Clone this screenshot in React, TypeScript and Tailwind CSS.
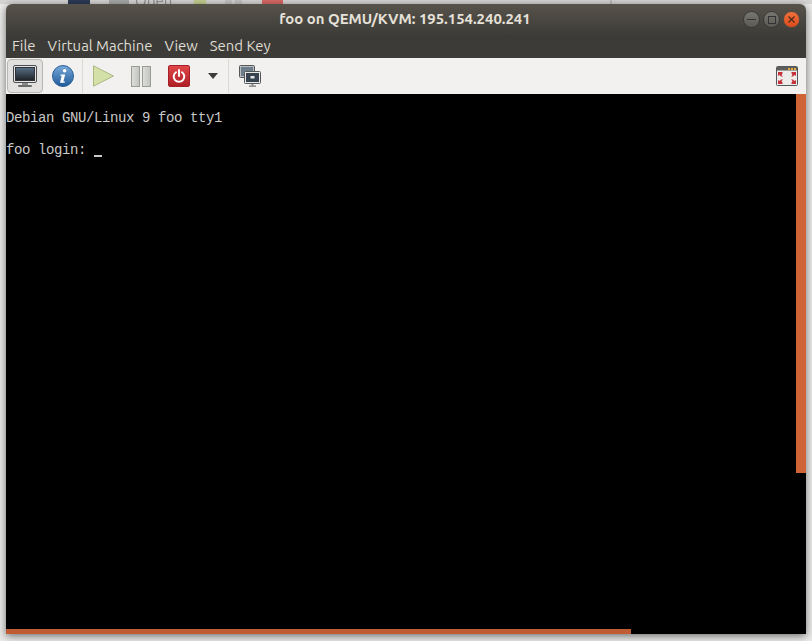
import React from "react";

function MonitorIcon() {
  return (
    <svg width="24" height="23" viewBox="0 0 24 23">
      <defs>
        <linearGradient id="screen" x1="0" y1="0" x2="0" y2="1">
          <stop offset="0" stopColor="#5a7086" />
          <stop offset="1" stopColor="#1d2126" />
        </linearGradient>
      </defs>
      <rect x="0.5" y="0.5" width="23" height="17" rx="1.5" fill="#e4e4e2" stroke="#4d5052" />
      <rect x="2.5" y="2.5" width="19" height="13" fill="url(#screen)" stroke="#30343a" />
      <rect x="9" y="18" width="6" height="2" fill="#8a8c8a" />
      <rect x="5" y="20" width="14" height="2" rx="1" fill="#6a6c6a" />
    </svg>
  );
}

function InfoIcon() {
  return (
    <svg width="22" height="22" viewBox="0 0 22 22">
      <defs>
        <linearGradient id="info" x1="0" y1="0" x2="0" y2="1">
          <stop offset="0" stopColor="#78a9da" />
          <stop offset="1" stopColor="#1f5a99" />
        </linearGradient>
      </defs>
      <circle cx="11" cy="11" r="10.5" fill="url(#info)" stroke="#2a5f97" />
      <circle cx="12.6" cy="5.8" r="1.8" fill="#fff" />
      <path d="M8.6 9.4h4.6l-1.8 7h1.6l-.4 1.3H8l1.7-7H8.3z" fill="#fff" />
    </svg>
  );
}

function PlayIcon() {
  return (
    <svg width="21" height="22" viewBox="0 0 21 22">
      <path d="M.5.8 20.5 11 .5 21.2z" fill="#d3e0a8" stroke="#aab883" />
    </svg>
  );
}

function PauseIcon() {
  return (
    <div className="flex gap-[2px]">
      <div className="w-[9px] h-[21px] border border-[#9a9c98] bg-gradient-to-r from-[#dcdeda] to-[#c2c5c0]" />
      <div className="w-[9px] h-[21px] border border-[#9a9c98] bg-gradient-to-r from-[#dcdeda] to-[#c2c5c0]" />
    </div>
  );
}

function PowerIcon() {
  return (
    <div className="w-[22px] h-[22px] rounded-[2px] bg-gradient-to-b from-[#e0474a] to-[#b01d24] border border-[#a52127] flex items-center justify-center">
      <svg width="16" height="16" viewBox="0 0 16 16" fill="none" stroke="#fff" strokeWidth="2" strokeLinecap="round">
        <path d="M5 4.2a5.3 5.3 0 1 0 6 0" />
        <path d="M8 2v6" />
      </svg>
    </div>
  );
}

function ConsolesIcon() {
  return (
    <svg width="22" height="22" viewBox="0 0 22 22">
      <rect x="0.5" y="0.5" width="15" height="12" rx="1" fill="#b9bdc0" stroke="#55585a" />
      <rect x="2" y="2" width="12" height="9" fill="#6d7d8c" />
      <rect x="5.5" y="6.5" width="16" height="12" rx="1" fill="#e8e8e6" stroke="#55585a" />
      <rect x="7" y="8" width="13" height="9" fill="#37444f" />
      <path d="M11.5 11h4v2.5h-4z" fill="#e6e6e6" />
      <rect x="12.5" y="19" width="2" height="1.5" fill="#8a8c8a" />
      <rect x="10" y="20.5" width="7" height="1.2" fill="#6a6c6a" />
    </svg>
  );
}

function FullscreenIcon() {
  return (
    <svg width="22" height="20" viewBox="0 0 22 20">
      <rect x="0.5" y="0.5" width="21" height="19" rx="1" fill="#ececea" stroke="#55585a" />
      <rect x="1" y="1" width="20" height="3.5" fill="#5e5e5a" />
      <rect x="12" y="2" width="2" height="2" fill="#e5a93c" />
      <rect x="15" y="2" width="2" height="2" fill="#e5a93c" />
      <rect x="18" y="2" width="2" height="2" fill="#e5a93c" />
      <g fill="#c5323c">
        <path d="M2 6h4.5v1.5L5.5 9 7 10.5H5L3.5 9 2 10z" />
        <path d="M20 6h-4.5v1.5L16.5 9 15 10.5h2L18.5 9 20 10z" />
        <path d="M2 18h4.5v-1.5L5.5 15 7 13.5H5L3.5 15 2 14z" />
        <path d="M20 18h-4.5v-1.5L16.5 15 15 13.5h2L18.5 15 20 14z" />
      </g>
    </svg>
  );
}

function WindowButton({ kind }: { kind: "min" | "max" | "close" }) {
  const color =
    kind === "close"
      ? "bg-gradient-to-b from-[#f0713c] to-[#de4a1a] border-[#5a4a3e]"
      : "bg-gradient-to-b from-[#77766f] to-[#5b5a54] border-[#3a3934]";
  return (
    <div className={`w-[17px] h-[17px] rounded-full border flex items-center justify-center ${color}`}>
      {kind === "min" && <div className="w-[9px] h-[1px] bg-[#333]" />}
      {kind === "max" && <div className="w-[8px] h-[8px] border border-[#333]" />}
      {kind === "close" && (
        <svg width="9" height="9" viewBox="0 0 9 9" stroke="#4a2a18" strokeWidth="1.2">
          <path d="M1.5 1.5l6 6M7.5 1.5l-6 6" />
        </svg>
      )}
    </div>
  );
}

// blurred app window showing behind this one, only its bottom edge is visible
function BehindStrip() {
  return (
    <div className="h-[4px] flex overflow-hidden blur-[0.5px] font-['Ubuntu','Noto_Sans',sans-serif]">
      <div className="ml-[68px] w-[22px] bg-[#2c3a55]" />
      <div className="ml-[19px] w-[20px] bg-[#a9aba9]" />
      <span className="ml-[6px] w-[40px] text-[15px] leading-[4px] text-[#8f8f8d] -mt-[1px]">Open</span>
      <div className="ml-[19px] w-[12px] bg-[#c3d08f]" />
      <div className="ml-[19px] w-[7px] bg-[#c4c4c2]" />
      <div className="ml-[3px] w-[7px] bg-[#c4c4c2]" />
      <div className="ml-[20px] w-[21px] bg-[#d96a66]" />
      <div className="ml-[327px] w-[2px] bg-[#bdbbb8]" />
    </div>
  );
}

export default function App() {
  return (
    <div className="w-[812px] h-[641px] overflow-hidden bg-[#ebebea] font-['Ubuntu','Noto_Sans',sans-serif]">
      <div className="bg-[#d6d5d3]">
        <BehindStrip />
      </div>
      <div className="relative mx-[6px] w-[800px] h-[630px] flex flex-col shadow-[0_2px_8px_rgba(0,0,0,0.55)] rounded-t-[6px] overflow-hidden">
        <div className="h-[54px] shrink-0 bg-gradient-to-b from-[#57534b] to-[#3c3b37] to-[60%] flex flex-col">
          <div className="h-[29px] pt-[1px] flex items-center relative">
            <span className="w-full pr-[2px] text-center text-[14.9px] font-bold text-[#e6e1d9]">
              foo on QEMU/KVM: 195.154.240.241
            </span>
            <div className="absolute right-[6px] top-[7px] flex gap-[3px]">
              <WindowButton kind="min" />
              <WindowButton kind="max" />
              <WindowButton kind="close" />
            </div>
          </div>
          <div className="flex gap-[12px] pl-[6px] pt-[3px] text-[14.9px] leading-[20px] text-[#dfdbd2]">
            <span>File</span>
            <span>Virtual Machine</span>
            <span>View</span>
            <span>Send Key</span>
          </div>
        </div>

        <div className="h-[36px] shrink-0 bg-[#f2f1f0] flex items-center">
          <div className="w-[36px] h-[34px] ml-[1px] rounded-[4px] border border-[#b8b6b2] bg-[#e2e1df] flex items-center justify-center">
            <MonitorIcon />
          </div>
          <div className="ml-[9px]">
            <InfoIcon />
          </div>
          <div className="w-[1px] h-[34px] ml-[8px] bg-[#dcdad7]" />
          <div className="ml-[10px]">
            <PlayIcon />
          </div>
          <div className="ml-[17px]">
            <PauseIcon />
          </div>
          <div className="ml-[17px]">
            <PowerIcon />
          </div>
          <div className="ml-[18px] w-0 h-0 border-x-[5px] border-x-transparent border-t-[6px] border-t-[#3c3c3c]" />
          <div className="w-[1px] h-[34px] ml-[10px] bg-[#dcdad7]" />
          <div className="ml-[10px]">
            <ConsolesIcon />
          </div>
          <div className="ml-auto mr-[8px]">
            <FullscreenIcon />
          </div>
        </div>

        <div className="flex-1 bg-black relative pt-[16px] font-['Liberation_Mono',monospace] text-[14px] tracking-[-0.4px] leading-[16px] text-[#c8c8c8] whitespace-pre">
          <div>Debian GNU/Linux 9 foo tty1</div>
          <div className="h-[16px]" />
          <div>foo login: <span className="inline-block w-[8px] h-[2px] bg-[#c8c8c8] align-[-3px]" /></div>
          <div className="absolute right-0 top-0 w-[10px] h-[379px] bg-[#cf6437]" />
          <div className="absolute left-0 bottom-0 w-[625px] h-[5px] bg-[#bf5c33]" />
        </div>
      </div>
    </div>
  );
}
